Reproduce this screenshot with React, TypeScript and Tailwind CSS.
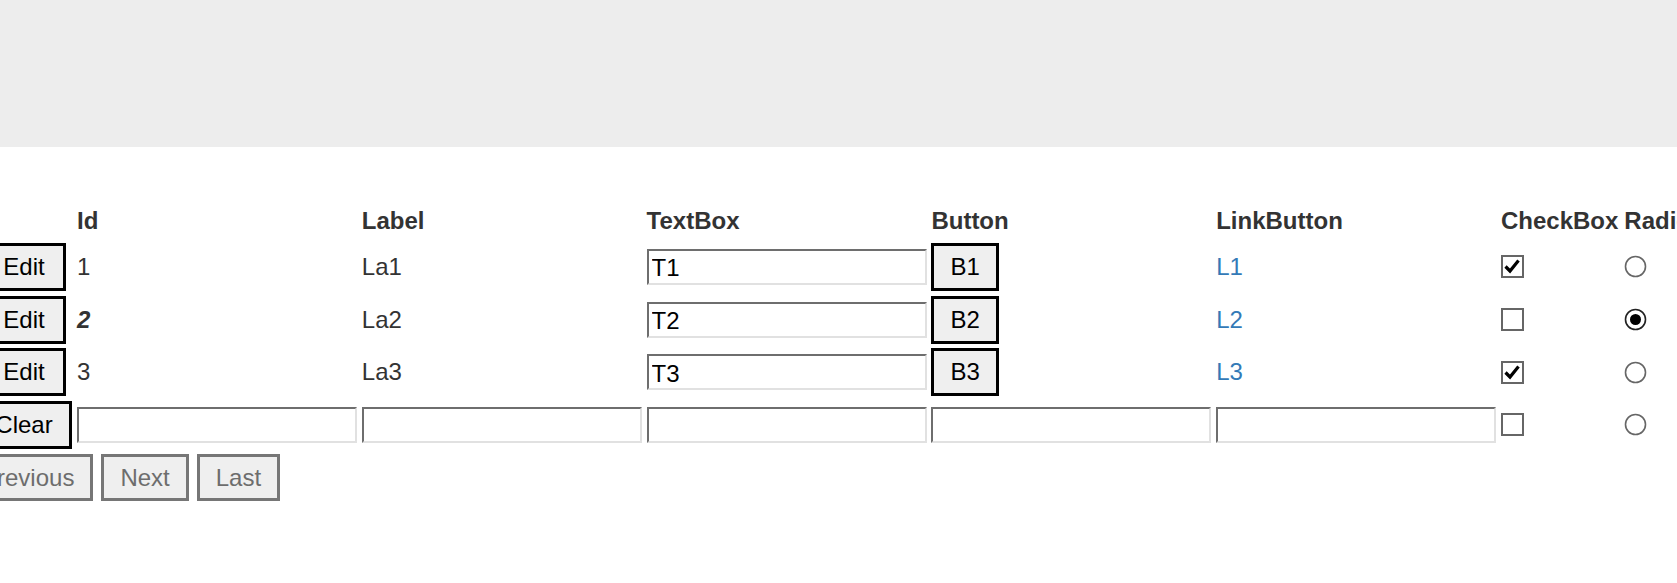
import React from 'react'

interface Row {
  id: string
  label: string
  text: string
  button: string
  link: string
  checked: boolean
  radio: boolean
  bold?: boolean
}

const rows: Row[] = [
  { id: '1', label: 'La1', text: 'T1', button: 'B1', link: 'L1', checked: true, radio: false },
  { id: '2', label: 'La2', text: 'T2', button: 'B2', link: 'L2', checked: false, radio: true, bold: true },
  { id: '3', label: 'La3', text: 'T3', button: 'B3', link: 'L3', checked: true, radio: false },
]

const cell = 'flex items-center px-[3px]'
const btn = 'h-[48px] px-4 bg-[#efefef] border-[3px] border-black text-black text-[24px] leading-none'
const editBtn = 'h-[48px] px-[18px] bg-[#efefef] border-[3px] border-black text-black text-[24px] leading-none'
const pagerBtn = 'h-[47px] px-4 bg-[#efefef] border-[3px] border-[#767676] text-[#6d6d6d] text-[24px] leading-none'
const input =
  'w-[280px] h-[36px] px-[3px] pt-[3px] bg-white text-black text-[24px] leading-none border-2 border-t-[#6e6e6e] border-l-[#6e6e6e] border-b-[#e1e1e1] border-r-[#e1e1e1] outline-none'

function CheckBox({ checked }: { checked: boolean }) {
  return (
    <svg width="23" height="23" viewBox="0 0 23 23">
      <rect x="1" y="1" width="21" height="21" fill="white" stroke="#666" strokeWidth="2" />
      {checked && <path d="M4.5 11.5 L9 16 L17.5 5.5" fill="none" stroke="black" strokeWidth="3.2" />}
    </svg>
  )
}

function Radio({ checked }: { checked: boolean }) {
  return (
    <svg width="23" height="23" viewBox="0 0 23 23">
      <circle cx="11.5" cy="11.5" r="10" fill="white" stroke={checked ? '#222' : '#666'} strokeWidth="1.6" />
      {checked && <circle cx="11.5" cy="11.5" r="5.5" fill="black" />}
    </svg>
  )
}

export default function App() {
  return (
    <div className="w-full overflow-hidden text-[#333] text-[24px]" style={{ fontFamily: '"Liberation Sans", Arial, sans-serif' }}>
      <div className="h-[147px] bg-[#ededed]" />
      <div className="pt-[55px]">
        <div className="grid w-max -ml-[26px] grid-cols-[100px_284.8px_284.8px_284.8px_284.8px_284.8px_auto_auto] grid-rows-[38px_53px_53px_52px_53px]">
          <div />
          <div className={cell + ' font-bold'}>Id</div>
          <div className={cell + ' font-bold'}>Label</div>
          <div className={cell + ' font-bold'}>TextBox</div>
          <div className={cell + ' font-bold'}>Button</div>
          <div className={cell + ' font-bold'}>LinkButton</div>
          <div className={cell + ' font-bold'}>CheckBox</div>
          <div className={cell + ' font-bold'}>RadioButton</div>

          {rows.map((r) => (
            <React.Fragment key={r.id}>
              <div className={cell + ' justify-center'}>
                <button className={editBtn}>Edit</button>
              </div>
              <div className={cell + (r.bold ? ' font-bold italic' : '')}>{r.id}</div>
              <div className={cell}>{r.label}</div>
              <div className={cell}>
                <input className={input} defaultValue={r.text} />
              </div>
              <div className={cell}>
                <button className={btn}>{r.button}</button>
              </div>
              <div className={cell}>
                <a href="#" className="text-[#337ab7]">{r.link}</a>
              </div>
              <div className={cell}>
                <CheckBox checked={r.checked} />
              </div>
              <div className={cell}>
                <Radio checked={r.radio} />
              </div>
            </React.Fragment>
          ))}

          <div className={cell + ' justify-center'}>
            <button className={btn}>Clear</button>
          </div>
          <div className={cell}><input className={input} /></div>
          <div className={cell}><input className={input} /></div>
          <div className={cell}><input className={input} /></div>
          <div className={cell}><input className={input} /></div>
          <div className={cell}><input className={input} /></div>
          <div className={cell}><CheckBox checked={false} /></div>
          <div className={cell}><Radio checked={false} /></div>
        </div>

        <div className="flex gap-2 -ml-[38px] mt-[3px]">
          <button className={pagerBtn}>Previous</button>
          <button className={pagerBtn}>Next</button>
          <button className={pagerBtn}>Last</button>
        </div>
      </div>
    </div>
  )
}
